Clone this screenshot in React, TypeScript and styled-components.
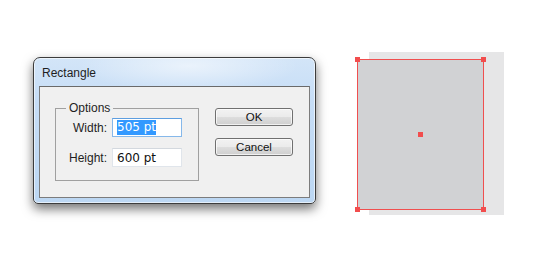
import styled, { createGlobalStyle } from "styled-components"

const GlobalStyle = createGlobalStyle`
  html, body {
    margin: 0;
    padding: 0;
    background: #ffffff;
  }
  body {
    font-family: "Liberation Sans", Arial, sans-serif;
  }
`

const Stage = styled.div`
  display: flex;
  align-items: flex-start;
  width: 552px;
  height: 265px;
  padding-left: 33px;
  box-sizing: border-box;
  overflow: hidden;
`

const Window = styled.div`
  margin-top: 57px;
  width: 283px;
  height: 147px;
  box-sizing: border-box;
  display: flex;
  flex-direction: column;
  padding: 0 5px 5px;
  border: 1px solid #3c3c3c;
  border-radius: 7px 7px 5px 5px;
  background:
    radial-gradient(ellipse 110px 26px at 55% 8px, rgba(255, 255, 255, 0.55), rgba(255, 255, 255, 0) 100%),
    linear-gradient(180deg, #d3e5f8 0%, #c6ddf6 30%, #bcd7f3 100%);
  box-shadow: 0 5px 11px rgba(0, 0, 0, 0.55), inset 0 0 0 1px rgba(255, 255, 255, 0.6);
`

const TitleBar = styled.div`
  height: 28px;
  display: flex;
  align-items: center;
  padding-left: 3px;
  padding-top: 1px;
  box-sizing: border-box;
  font-size: 12px;
  color: #1e1e1e;
`

const Client = styled.div`
  flex: 1;
  display: flex;
  align-items: flex-start;
  gap: 16px;
  padding: 14px 0 0 15px;
  background: #f0f0f0;
  border: 1px solid #7c7c7c;
  border-top-color: #6a6a6a;
`

const Group = styled.fieldset`
  margin: 0;
  width: 144px;
  height: 80px;
  box-sizing: border-box;
  padding: 3px 0 0 0;
  border: 1px solid #a0a0a0;
  border-radius: 0;
  display: flex;
  flex-direction: column;
  gap: 11px;
`

const Legend = styled.legend`
  margin-left: 10px;
  padding: 0 3px;
  font-size: 12px;
  line-height: 14px;
  color: #1e1e1e;
`

const Row = styled.div`
  display: flex;
  align-items: center;
  gap: 5px;
`

const Label = styled.span`
  width: 51px;
  text-align: right;
  font-size: 12px;
  color: #1e1e1e;
`

const Field = styled.div<{ $focused?: boolean }>`
  width: 70px;
  height: 19px;
  box-sizing: border-box;
  display: flex;
  align-items: center;
  padding-left: 4px;
  background: #ffffff;
  border: 1px solid ${({ $focused }) => ($focused ? "#86b8ea" : "#e0e5eb")};
  border-top-color: ${({ $focused }) => ($focused ? "#5d9ee0" : "#d3d8de")};
  font-family: "DejaVu Sans", Verdana, sans-serif;
  font-size: 12px;
  color: #111111;
`

const Selected = styled.span`
  background: #3399ff;
  color: #ffffff;
  line-height: 15px;
`

const Buttons = styled.div`
  display: flex;
  flex-direction: column;
  gap: 12px;
  padding-top: 7px;
`

const Button = styled.button`
  width: 78px;
  height: 18px;
  margin: 0;
  padding: 0;
  border: 1px solid #707070;
  border-radius: 3px;
  background: linear-gradient(180deg, #f2f2f2 0%, #ebebeb 48%, #dddddd 52%, #cfcfcf 100%);
  box-shadow: inset 0 0 0 1px rgba(255, 255, 255, 0.7);
  font-family: "Liberation Sans", Arial, sans-serif;
  font-size: 11.5px;
  color: #111111;
`

const Artboard = styled.div`
  position: relative;
  margin-top: 52px;
  margin-left: 41px;
  width: 147px;
  height: 163px;
`

const Backdrop = styled.div`
  position: absolute;
  left: 12px;
  top: 0;
  width: 135px;
  height: 163px;
  background: #e6e6e7;
`

const Shape = styled.div`
  position: absolute;
  left: 0;
  top: 7px;
  width: 127px;
  height: 151px;
  box-sizing: border-box;
  background: #d1d2d4;
  border: 1px solid #f04f4f;
`

const Handle = styled.div<{ $x: number; $y: number }>`
  position: absolute;
  left: ${({ $x }) => $x - 3}px;
  top: ${({ $y }) => $y - 3}px;
  width: 5px;
  height: 5px;
  background: #f24d4d;
`

const handles = [
  [0, 7],
  [126, 7],
  [0, 157],
  [126, 157],
  [63, 82],
]

export default function App() {
  return (
    <>
      <GlobalStyle />
      <Stage>
        <Window>
          <TitleBar>Rectangle</TitleBar>
          <Client>
            <Group>
              <Legend>Options</Legend>
              <Row>
                <Label>Width:</Label>
                <Field $focused>
                  <Selected>505 pt</Selected>
                </Field>
              </Row>
              <Row>
                <Label>Height:</Label>
                <Field>600 pt</Field>
              </Row>
            </Group>
            <Buttons>
              <Button>OK</Button>
              <Button>Cancel</Button>
            </Buttons>
          </Client>
        </Window>
        <Artboard>
          <Backdrop />
          <Shape />
          {handles.map(([x, y], i) => (
            <Handle key={i} $x={x + 1} $y={y + 1} />
          ))}
        </Artboard>
      </Stage>
    </>
  )
}
